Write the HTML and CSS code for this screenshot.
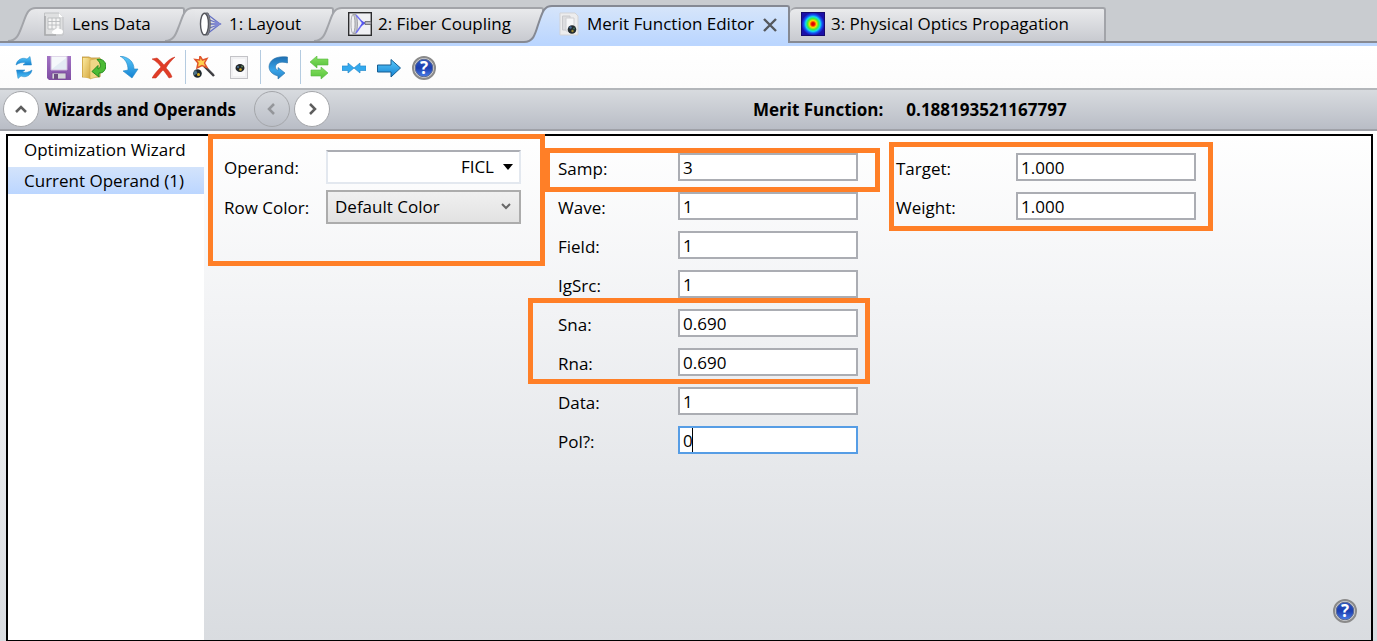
FILE: index.html
```html
<!DOCTYPE html>
<html lang="en">
<head>
<meta charset="utf-8">
<title>Merit Function Editor</title>
<link rel="stylesheet" href="styles.css">
</head>
<body>
<svg class="defs" aria-hidden="true">
  <defs>
    <linearGradient id="tabFill" x1="0" y1="0" x2="0" y2="1"><stop offset="0" stop-color="#e9eaec"/><stop offset="1" stop-color="#c8cad0"/></linearGradient>
    <linearGradient id="activeFill" x1="0" y1="0" x2="0" y2="1"><stop offset="0" stop-color="#d6e5fa"/><stop offset="1" stop-color="#bbd6ff"/></linearGradient>
    <linearGradient id="blue" x1="0" y1="0" x2="0" y2="1"><stop offset="0" stop-color="#1f6fb2"/><stop offset="0.6" stop-color="#38a5ea"/><stop offset="1" stop-color="#2a7fc0"/></linearGradient>
    <linearGradient id="sky" x1="0" y1="0" x2="0" y2="1"><stop offset="0" stop-color="#59c8fa"/><stop offset="1" stop-color="#1482d2"/></linearGradient>
    <linearGradient id="green" x1="0" y1="0" x2="0" y2="1"><stop offset="0" stop-color="#86e060"/><stop offset="1" stop-color="#56c23c"/></linearGradient>
    <linearGradient id="folder" x1="0" y1="0" x2="1" y2="1"><stop offset="0" stop-color="#fbe89c"/><stop offset="1" stop-color="#d3a53c"/></linearGradient>
    <linearGradient id="purple" x1="0" y1="0" x2="0" y2="1"><stop offset="0" stop-color="#a273c4"/><stop offset="1" stop-color="#7f4da3"/></linearGradient>
    <linearGradient id="royal" x1="0" y1="0" x2="0" y2="1"><stop offset="0" stop-color="#2c58c0"/><stop offset="0.5" stop-color="#1b3eb0"/><stop offset="1" stop-color="#4a7de8"/></linearGradient>
    <radialGradient id="spectrum"><stop offset="0" stop-color="#c80000"/><stop offset="0.15" stop-color="#f01800"/><stop offset="0.3" stop-color="#ffd800"/><stop offset="0.48" stop-color="#3ef03a"/><stop offset="0.64" stop-color="#12d8ee"/><stop offset="0.8" stop-color="#1450f4"/><stop offset="1" stop-color="#1b10a8"/></radialGradient>
    <symbol id="help" viewBox="0 0 24 24">
      <circle cx="12" cy="12" r="11" fill="#dcdcdc" stroke="#8a8a8a" stroke-width="2"/>
      <circle cx="12" cy="12" r="8.8" fill="url(#royal)" stroke="#5c6a94" stroke-width="1"/>
      <text x="12" y="18" text-anchor="middle" font-family="Open Sans, sans-serif" font-weight="700" font-size="17" fill="#fff">?</text>
    </symbol>
    <symbol id="slope" viewBox="0 0 30 34">
      <path d="M0 34C9 34 11 27 14 19C18 9 19 1 28 1H30V34Z" fill="url(#tabFill)"/>
      <path d="M0 34C9 34 11 27 14 19C18 9 19 1 28 1H30" fill="none" stroke="#a2a4a9" stroke-width="2"/>
    </symbol>
  </defs>
</svg>

<div class="app">
  <nav class="tabs" aria-label="Windows">
    <button class="tab tab-lens" type="button">
      <svg class="slope"><use href="#slope"/></svg>
      <span class="tab-body">
        <svg class="icon" viewBox="0 0 24 24"><path d="M2.500 1H17L21 5V23H2.500Z" fill="#dfe0e1" stroke="#c0c2c4"/><path d="M17 1V5H21" fill="#fff"/><path d="M3 4V23H14" fill="none" stroke="#a9abad" stroke-width="1.600"/><path d="M6 6H18V17H6ZM6 9.500H18M6 13H18M10 6V17M14 6V17" fill="#f4f4f4" stroke="#b9bbbd" stroke-width="0.9"/><path d="M10 21C10 18 13 18 14 16.500C16 15 18 17 19.500 17.500C22 19 21 22 19 22H12Z" fill="#fff"/></svg>
        <span>Lens Data</span>
      </span>
    </button>
    <button class="tab tab-layout" type="button">
      <svg class="slope"><use href="#slope"/></svg>
      <span class="tab-body">
        <svg class="icon" viewBox="0 0 24 24"><path d="M8 2L21 12L8 22M8 7L21 12L8 17M4 12H22" fill="none" stroke="#6570c4" stroke-width="1.3"/><path d="M16 8.500L22 12L16 15.500Z" fill="#8088d4"/><path d="M6.500 1H9C12 7 12 17 9 23H6.500Z" fill="#8b8d97" stroke="#65676e"/><ellipse cx="5.500" cy="12" rx="4" ry="10.800" fill="#fff" stroke="#54565c" stroke-width="1.4"/></svg>
        <span>1: Layout</span>
      </span>
    </button>
    <button class="tab tab-fiber" type="button">
      <svg class="slope"><use href="#slope"/></svg>
      <span class="tab-body">
        <svg class="icon" viewBox="0 0 24 24"><rect x="0.700" y="0.700" width="22.600" height="22.600" fill="#f0f0f4" stroke="#2c2c2e" stroke-width="1.4"/><path d="M5 2.500H8C10 8 10 16 8 21.500H5Z" fill="#c6c7cc" stroke="#8c8d92" stroke-width="0.7"/><ellipse cx="5" cy="12" rx="2" ry="9.500" fill="#f2f2f5" stroke="#97989e" stroke-width="0.8"/><path d="M8 3L15 11L8 21M15 11H18" fill="none" stroke="#7474f4" stroke-width="1.5"/><path d="M12 8L18 11L12 15L14 11Z" fill="#5555ed"/><path d="M17 9.500H23V12.500H17Z" fill="#b8b8be" stroke="#65656b" stroke-width="0.8"/></svg>
        <span>2: Fiber Coupling</span>
      </span>
    </button>
    <button class="tab tab-merit active" type="button" aria-current="page">
      <svg class="slope" viewBox="0 0 30 38"><path d="M0 37C9 37 11 30 14 20C18 9 19 1 28 1H30V38H0Z" fill="url(#activeFill)"/><path d="M0 37C9 37 11 30 14 20C18 9 19 1 28 1H30" fill="none" stroke="#858993" stroke-width="2"/></svg>
      <span class="tab-body">
        <svg class="icon" viewBox="0 0 24 24"><path d="M3 1H18L21 4V23H3Z" fill="#ededee" stroke="#d3d3d5"/><path d="M5.500 4H13V18H5.500Z" fill="#dddddf" stroke="#c9c9cc"/><path d="M9 6H17V19H9Z" fill="#f7f7f8" stroke="#cfcfd2"/><circle cx="15" cy="17.500" r="4.300" fill="#232b2f"/><circle cx="13.500" cy="15.500" r="1.200" fill="#4a6c9c"/><circle cx="17" cy="16.500" r="1" fill="#406c52"/><circle cx="15.500" cy="19" r="1.200" fill="#9f8a32"/></svg>
        <span>Merit Function Editor</span>
        <svg class="close" viewBox="0 0 16 16"><path d="M2 3L14 15M14 3L2 15" stroke="#55585d" stroke-width="2.4"/></svg>
      </span>
    </button>
    <button class="tab tab-pop" type="button">
      <span class="tab-body">
        <svg class="icon" viewBox="0 0 24 24"><rect width="24" height="24" fill="#1b10a8"/><circle cx="12" cy="12" r="11.500" fill="url(#spectrum)"/><rect x="0.500" y="0.500" width="23" height="23" fill="none" stroke="#16096e"/></svg>
        <span>3: Physical Optics Propagation</span>
      </span>
    </button>
  </nav>

  <div class="toolbar" role="toolbar" aria-label="Editor tools">
    <button class="tool" type="button" aria-label="Update"><svg class="icon" viewBox="0 0 24 24"><g id="half"><path d="M4 9C5 3 11 1 15 3L18 0.500L19.500 9H11L13.500 7C10 6 7 7 4 9Z" fill="url(#sky)" stroke="#2386c7" stroke-width="0.5"/></g><use href="#half" transform="rotate(180 12 11.500)"/></svg></button>
    <button class="tool" type="button" aria-label="Save"><svg class="icon" viewBox="0 0 24 24"><path d="M0 0H24V24H2L0 22Z" fill="url(#purple)"/><path d="M4 0H20V14H4Z" fill="#f5f8fb" stroke="#c9b6d8"/><path d="M5 13L19 2V13Z" fill="#e3ebf4"/><path d="M5 17H19V23H5Z" fill="#d4d5d9" stroke="#774a94" stroke-width="0.8"/><path d="M7 18H11V23H7Z" fill="#6d4e82"/></svg></button>
    <button class="tool" type="button" aria-label="Load"><svg class="icon" viewBox="0 0 24 24"><path d="M0 1H7L9 2H18V21H0Z" fill="#e8c25c" stroke="#b8913a" stroke-width="0.8"/><path d="M1 2H6L9 5V23L1 21Z" fill="url(#folder)"/><path d="M8 4L18 2V20L8 23Z" fill="#efd786" stroke="#c9a44c" stroke-width="0.6"/><path d="M15 3.500C21 2 25 7 23.500 12C22.500 16 20 17 17 17V21L10 15.500L16 9.500V13C19 12 20 8 15 3.500Z" fill="#4bbb35" stroke="#258c1f"/></svg></button>
    <button class="tool" type="button" aria-label="Insert"><svg class="icon" viewBox="0 0 24 24"><path d="M3 0C12 1 17 6 17 13H21L15 22L6 15L11 14C11 7 8 3 3 0Z" fill="url(#sky)" stroke="#2487c5" stroke-width="0.6"/></svg></button>
    <button class="tool" type="button" aria-label="Delete"><svg class="icon" viewBox="0 0 24 24"><path d="M0 3L5 2C8 4 10 7 12 9C15 5 19 2 23 1C19 5 16 8 14 12C17 15 19 18 20 21L17 22C15 19 13 16 11 14C8 17 6 20 4 22L0 22C3 17 6 14 9 11C6 7 4 5 0 3Z" fill="#e03c26" stroke="#c62d1b" stroke-width="0.5"/></svg></button>
    <span class="separator"></span>
    <button class="tool" type="button" aria-label="Optimization wizard"><svg class="icon" viewBox="0 0 24 24"><path d="M12 10L22 20" stroke="#3c3c40" stroke-width="2.400"/><path d="M14 10L22 18" stroke="#a5a5aa" stroke-width="0.8"/><path d="M8 0L10.500 4L15 2.500L12.500 7L15 11.500L10 9.500L5 12L6 7L3 3.500L7.500 4Z" fill="#ffd34f" stroke="#e0562d" stroke-width="1.5"/><circle cx="5.500" cy="17.500" r="4.300" fill="#1e282d"/><path d="M1.500 16L4 14L5.500 17.500L2 19.500Z" fill="#4a7187"/><circle cx="6.500" cy="18.500" r="1.500" fill="#e3b624"/></svg></button>
    <button class="tool" type="button" aria-label="Operand page"><svg class="icon" viewBox="0 0 24 24"><rect x="3.500" y="0.500" width="17" height="22" fill="#f1f1f3" stroke="#c3c3c7"/><rect x="6" y="3" width="12" height="17" fill="#fafafb"/><ellipse cx="13" cy="12" rx="4.500" ry="4" fill="#24282a"/><circle cx="11" cy="11" r="1" fill="#4d7a9d"/><circle cx="13.500" cy="13.500" r="1.300" fill="#cda727"/><circle cx="15" cy="10.500" r="1" fill="#547a55"/></svg></button>
    <span class="separator"></span>
    <button class="tool" type="button" aria-label="Undo"><svg class="icon" viewBox="0 0 24 24"><path d="M20.500 1V7C14 5 9 7 8.500 10.500C8.300 12.500 9.500 14 11 14.500V11.500L18 17L11 23V20C5 18.500 2 15 2 10.500C2.500 4 9 -0.500 20.500 1Z" fill="url(#blue)" stroke="#2870a8" stroke-width="0.6"/></svg></button>
    <span class="separator"></span>
    <button class="tool" type="button" aria-label="Swap"><svg class="icon" viewBox="0 0 24 24"><path d="M3 6L10 0V3H21V9H10V12Z" fill="url(#green)" stroke="#58b840" stroke-width="0.6"/><path d="M21 17L14 11V14H4V20H14V23Z" fill="url(#green)" stroke="#58b840" stroke-width="0.6"/></svg></button>
    <button class="tool" type="button" aria-label="Collapse"><svg class="icon" viewBox="0 0 24 24"><path d="M0 10H6V7L12 12L6 17V14.500H0ZM24 10H18V7L12 12L18 17V14.500H24Z" fill="#33a9ee" stroke="#278bcc" stroke-width="0.7"/></svg></button>
    <button class="tool" type="button" aria-label="Next"><svg class="icon" viewBox="0 0 24 24"><path d="M0.500 9H14V3.500L23.500 12L14 21V16H0.500Z" fill="url(#sky)" stroke="#165d91"/></svg></button>
    <button class="tool" type="button" aria-label="Help"><svg class="icon"><use href="#help"/></svg></button>
  </div>

  <header class="header">
    <div class="header-left">
      <button class="round" type="button" aria-label="Collapse panel"><svg viewBox="0 0 16 16"><path d="M3 11L8 6L13 11" /></svg></button>
      <h1 class="title">Wizards and Operands</h1>
      <button class="round previous" type="button" aria-label="Previous" disabled><svg viewBox="0 0 16 16"><path d="M10 3L5 8L10 13"/></svg></button>
      <button class="round" type="button" aria-label="Next operand"><svg viewBox="0 0 16 16"><path d="M6 3L11 8L6 13"/></svg></button>
    </div>
    <div class="merit"><span>Merit Function:</span><output>0.188193521167797</output></div>
  </header>

  <main class="workspace">
    <div class="panel">
      <nav class="sidebar" aria-label="Wizards">
        <a class="side-item" href="#wizard">Optimization Wizard</a>
        <a class="side-item selected" href="#operand">Current Operand (1)</a>
      </nav>
      <form class="form">
        <div class="column column-operand">
          <label for="operand">Operand:</label>
          <div class="picker">
            <select id="operand" class="operand-select"><option>FICL</option></select>
            <svg class="arrow" viewBox="0 0 12 12"><path d="M1 3H11L6 9Z" fill="#000"/></svg>
          </div>
          <label for="color">Row Color:</label>
          <div class="picker">
            <select id="color" class="color-select"><option>Default Color</option></select>
            <svg class="arrow chevron" viewBox="0 0 12 12"><path d="M2 3L6 7L10 3" fill="none" stroke="#686868" stroke-width="2"/></svg>
          </div>
        </div>
        <div class="column column-values">
          <label for="samp">Samp:</label><input id="samp" value="3">
          <label for="wave">Wave:</label><input id="wave" value="1">
          <label for="field">Field:</label><input id="field" value="1">
          <label for="igsrc">IgSrc:</label><input id="igsrc" value="1">
          <label for="sna">Sna:</label><input id="sna" value="0.690">
          <label for="rna">Rna:</label><input id="rna" value="0.690">
          <label for="data">Data:</label><input id="data" value="1">
          <label for="pol">Pol?:</label>
          <div class="editing"><input id="pol" class="focused" value="0"><span class="caret"></span></div>
        </div>
        <div class="column column-target">
          <label for="target">Target:</label><input id="target" value="1.000">
          <label for="weight">Weight:</label><input id="weight" value="1.000">
        </div>
      </form>
      <button class="panel-help" type="button" aria-label="Panel help"><svg class="icon"><use href="#help"/></svg></button>
      <span class="mark mark-operand"></span>
      <span class="mark mark-samp"></span>
      <span class="mark mark-apertures"></span>
      <span class="mark mark-target"></span>
    </div>
  </main>
</div>
</body>
</html>
```
FILE: styles.css
```css
* { box-sizing: border-box; }

body {
  margin: 0;
  font: 17px/24px "Open Sans", "Noto Sans", sans-serif;
  color: #000;
}

button, input, select { font: inherit; color: inherit; margin: 0; }
button { padding: 0; border: 0; background: none; }
svg { display: block; flex: none; }

.defs { position: absolute; width: 0; height: 0; }
.icon { width: 24px; height: 24px; }

.app { display: flex; flex-direction: column; min-height: 100vh; }

/* Tabs */
.tabs {
  display: flex;
  align-items: flex-end;
  height: 43px;
  padding-left: 8px;
  background: #c9ccd0;
  border-bottom: 2px solid #878a93;
}
.tab { display: flex; height: 34px; white-space: nowrap; }
.tab + .tab { margin-left: -20px; }
.slope { width: 30px; height: 100%; }
.tab-body {
  flex: 1;
  display: flex;
  align-items: center;
  gap: 6px;
  height: 100%;
  padding: 0 0 3px 4px;
  background: linear-gradient(#e9eaec, #c8cad0);
  border-top: 2px solid #a2a4a9;
  border-right: 2px solid #a2a4a9;
  border-top-right-radius: 3px;
}
.tab-lens { width: 177px; }
.tab-layout { width: 169px; }
.tab-fiber { width: 230px; }
.tab-merit { width: 266px; }
.tab-pop { width: 316px; }
.tab.active { position: relative; height: 38px; margin-bottom: -2px; }
.active .tab-body {
  padding-bottom: 2px;
  padding-left: 3px;
  background: linear-gradient(#d6e5fa, #bbd6ff);
  border-color: #858993;
}
.active + .tab { margin-left: 0; }
.tab-pop .tab-body { padding-left: 11px; border-top-left-radius: 6px; }
.close { width: 16px; height: 16px; margin-left: 2px; }

/* Toolbar */
.toolbar {
  display: flex;
  align-items: center;
  height: 45px;
  padding-left: 6px;
  border-top: 3px solid #bbd6ff;
  background: linear-gradient(#fff, #fcfcfc);
}
.tool { display: flex; justify-content: center; width: 35px; padding-top: 2px; }
.separator { width: 5px; height: 34px; border-right: 1px solid #b4cbe0; }

/* Header */
.header {
  display: flex;
  align-items: center;
  height: 43px;
  background: linear-gradient(#d8dbdf, #b9bdc6);
  border-top: 2px solid #b3b6ba;
  border-bottom: 2px solid #9fa1a8;
  font-weight: 700;
}
.header-left { display: flex; align-items: center; flex: 0 0 753px; padding-left: 3px; }
.title { width: 209px; margin: 0 0 0 6px; font-size: 17px; line-height: 24px; }
.round {
  display: flex;
  align-items: center;
  justify-content: center;
  width: 36px;
  height: 36px;
  margin-bottom: 2px;
  border: 1px solid #a4a6aa;
  border-radius: 50%;
  background: #fff;
}
.round svg { width: 16px; height: 16px; fill: none; stroke: #5e5e5e; stroke-width: 2.5; }
.previous { margin-right: 4px; background: transparent; }
.previous svg { stroke: #94969a; }
.merit { display: flex; gap: 23px; white-space: nowrap; }

/* Workspace */
.workspace {
  flex: 1;
  display: flex;
  padding: 3px 4px 0 6px;
  background: linear-gradient(#fff, #f2f3f5 35%, #d9dce0);
}
.panel {
  position: relative;
  flex: 1;
  display: flex;
  border: 2px solid #000;
  border-bottom-width: 1px;
}
.sidebar { flex: 0 0 196px; background: #fff; }
.side-item {
  display: block;
  height: 27px;
  margin-bottom: 4px;
  padding: 2px 0 0 16px;
  color: #000;
  text-decoration: none;
  white-space: nowrap;
}
.selected { background: linear-gradient(#d3e3fb, #bbd6ff); }

.form { display: flex; align-items: flex-start; padding-left: 20px; }
.column { display: grid; row-gap: 11px; padding-top: 17px; }
.column label { padding-top: 4px; white-space: nowrap; }
.column-operand { grid-template-columns: 102px 195px; row-gap: 6px; padding-top: 14px; }
.column-operand label { padding-top: 6px; }
.column-values { grid-template-columns: 120px 180px; margin-left: 37px; }
.column-target { grid-template-columns: 120px 180px; margin-left: 38px; }

.column input {
  width: 100%;
  height: 28px;
  padding: 0 3px;
  border: 2px solid #abadb3;
  border-radius: 0;
  background: #fff;
  outline: 0;
}
.column .focused { border-color: #569de5; }
.editing { position: relative; height: 28px; }
.caret { position: absolute; left: 14px; top: 2px; width: 1px; height: 24px; background: #000; }

.picker { display: grid; align-items: center; }
.picker select, .arrow { grid-area: 1 / 1; }
.picker select {
  appearance: none;
  width: 100%;
  height: 34px;
  border-radius: 0;
  outline: 0;
}
.operand-select {
  padding: 0 25px 0 8px;
  border: 2px solid #e3e8ef;
  border-top-color: #abadb3;
  background: #fff;
  text-align-last: right;
}
.color-select {
  padding: 0 25px 0 7px;
  border: 2px solid #acacac;
  background: linear-gradient(#f0f0f0, #e2e2e2);
}
.arrow { justify-self: end; width: 12px; height: 12px; margin-right: 7px; pointer-events: none; }
.chevron { margin-right: 9px; }

.panel-help { position: absolute; right: 14px; bottom: 17px; }

/* Highlight frames drawn over the form */
.mark { position: absolute; border: 5px solid #ff7f27; pointer-events: none; }
.mark-operand { left: 200px; top: -2px; width: 337px; height: 132px; }
.mark-samp { left: 537px; top: 12px; width: 335px; height: 44px; }
.mark-apertures { left: 520px; top: 162px; width: 342px; height: 86px; }
.mark-target { left: 881px; top: 6px; width: 324px; height: 89px; }
```
